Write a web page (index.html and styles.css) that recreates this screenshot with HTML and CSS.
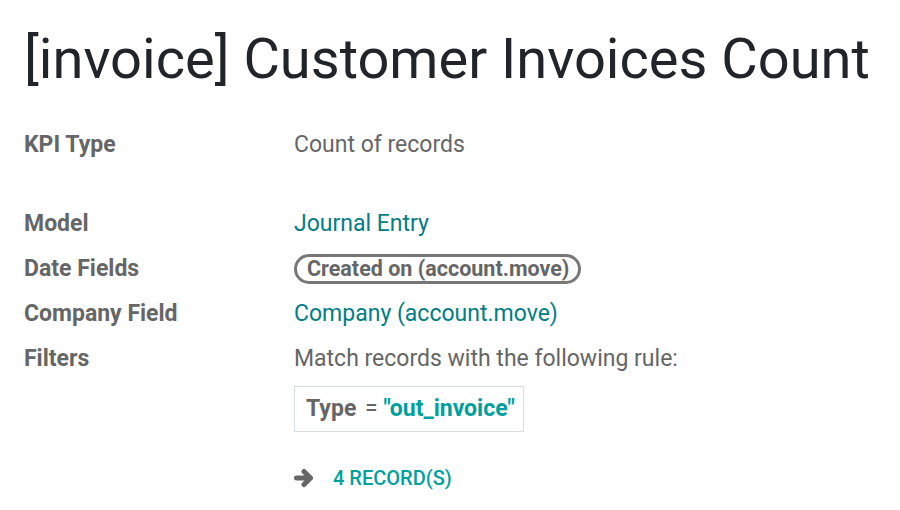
FILE: index.html
```html
<!DOCTYPE html>
<html lang="en">

<head>
    <meta charset="UTF-8">
    <meta name="viewport" content="width=device-width, initial-scale=1.0">
    <title>Customer Invoices Count</title>
    <link rel="stylesheet" href="styles.css">
</head>

<body>

    <div class="sheet">
        <h1>[invoice] Customer Invoices Count</h1>

        <div class="fields">
            <div class="row">
                <div class="label">KPI Type</div>
                <div class="value">Count of records</div>
            </div>

            <div class="row spaced">
                <div class="label">Model</div>
                <div class="value link">Journal Entry</div>
            </div>

            <div class="row">
                <div class="label">Date Fields</div>
                <div class="value"><span class="pill">Created on (account.move)</span></div>
            </div>

            <div class="row">
                <div class="label">Company Field</div>
                <div class="value link">Company (account.move)</div>
            </div>

            <div class="row">
                <div class="label">Filters</div>
                <div class="value">
                    <div>Match records with the following rule:</div>
                    <div class="rule">
                        <span class="rule-field">Type</span>
                        <span class="rule-op">=</span>
                        <span class="rule-value">"out_invoice"</span>
                    </div>
                    <div class="records">
                        <svg class="arrow" width="20" height="20" viewBox="0 0 20 20">
                            <path d="M2.5 10h14M10 3.5l6.5 6.5-6.5 6.5" fill="none" stroke="#666" stroke-width="5"
                                stroke-linecap="round" stroke-linejoin="round" />
                        </svg>
                        <span>4 record(s)</span>
                    </div>
                </div>
            </div>
        </div>
    </div>

</body>

</html>
```

FILE: styles.css
```css
body {
    font-family: Roboto, "Noto Sans", sans-serif;
    background-color: #fff;
    margin: 0;
    color: #666;
}

.sheet {
    padding: 26px 24px 0;
}

h1 {
    font-size: 56px;
    font-weight: 400;
    color: #212529;
    margin: 0 0 30px;
    line-height: 66px;
    white-space: nowrap;
}

.fields {
    font-size: 23px;
}

.row {
    display: flex;
    line-height: 45px;
}

.row.spaced {
    margin-top: 34px;
}

.label {
    width: 270px;
    font-weight: bold;
    flex-shrink: 0;
}

.link {
    color: #017e84;
}

.pill {
    display: inline-block;
    border: 3px solid #777;
    border-radius: 20px;
    line-height: 24px;
    padding: 0 9px 0 10px;
    font-size: 21.5px;
    font-weight: bold;
}

.rule {
    display: inline-block;
    border: 1px solid #d8dee4;
    padding: 0 8px 0 11px;
    line-height: 44px;
    margin-top: 5px;
}

.rule-field {
    font-weight: bold;
    margin-right: 3px;
}

.rule-value {
    color: #00a09d;
    font-weight: bold;
}

.records {
    display: flex;
    align-items: center;
    gap: 19px;
    margin-top: 31px;
    line-height: 30px;
    color: #00a09d;
    font-weight: 500;
    text-transform: uppercase;
    font-size: 20px;
}
```
